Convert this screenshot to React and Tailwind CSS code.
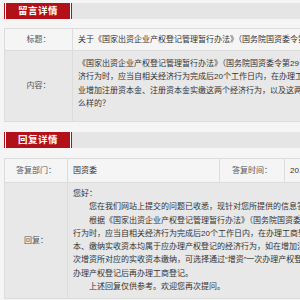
export default function App() {
  const font = { fontFamily: '"Liberation Sans", "Noto Sans CJK SC", sans-serif' };
  const Tab = ({ children }) => (
    <div className="h-[16px] flex bg-[#e5e5e5]">
      <div className="h-full w-[68px] border-x border-[#b3111a] bg-white px-[1px]">
        <div className="h-full bg-[#b3111a] flex items-center justify-center text-white text-[9.5px] font-bold leading-none tracking-[0.5px]">
          {children}
        </div>
      </div>
    </div>
  );
  return (
    <div className="w-[300px] h-[300px] overflow-hidden bg-[#f5f5f5]" style={font}>
      <div className="w-[460px] pl-[4px] pt-[3px] text-[8px] leading-[13.3px] text-[#333]">
        <Tab>留言详情</Tab>
        <div className="mt-[9px] border border-[#dcdcdc]">
          <div className="flex h-[21px] bg-[#f5f5f5]">
            <div className="w-[68px] shrink-0 border-r border-[#dcdcdc] flex items-center justify-center text-[#555]">标题：</div>
            <div className="flex-1 pl-[5px] flex items-center whitespace-nowrap overflow-hidden">
              关于《国家出资企业产权登记管理暂行办法》（国务院国资委令第29号）的咨询
            </div>
          </div>
          <div className="flex h-[71px] bg-[#e8e8e8] border-t border-[#dcdcdc]">
            <div className="w-[68px] shrink-0 border-r border-[#dcdcdc] flex items-center justify-center text-[#555]">内容：</div>
            <div className="flex-1 pl-[5px] pt-[6px] whitespace-nowrap overflow-hidden">
              <div>《国家出资企业产权登记管理暂行办法》（国务院国资委令第29号）规定</div>
              <div>济行为时，应当自相关经济行为完成后20个工作日内，在办理工商登记</div>
              <div>业增加注册资本金、注册资本金实缴这两个经济行为，以及这两个经济</div>
              <div>么样的？</div>
            </div>
          </div>
        </div>
        <div className="mt-[10px]">
          <Tab>回复详情</Tab>
        </div>
        <div className="mt-[10px] border border-[#dcdcdc]">
          <div className="flex h-[23px] bg-[#f5f5f5]">
            <div className="w-[63px] shrink-0 border-r border-[#dcdcdc] flex items-center justify-center text-[#555]">答复部门：</div>
            <div className="w-[152px] shrink-0 border-r border-[#dcdcdc] pl-[5px] flex items-center">国资委</div>
            <div className="w-[65px] shrink-0 border-r border-[#dcdcdc] flex items-center justify-center text-[#555]">答复时间：</div>
            <div className="flex-1 pl-[5px] flex items-center whitespace-nowrap">2019-08-05</div>
          </div>
          <div className="flex h-[116px] bg-[#e8e8e8] border-t border-[#dcdcdc]">
            <div className="w-[63px] shrink-0 border-r border-[#dcdcdc] flex items-center justify-center text-[#555]">回复：</div>
            <div className="flex-1 pl-[5px] pt-[4px] whitespace-nowrap overflow-hidden">
              <div>您好：</div>
              <div className="pl-[16px]">您在我们网站上提交的问题已收悉，现针对您所提供的信息答复如下：</div>
              <div className="pl-[16px]">根据《国家出资企业产权登记管理暂行办法》（国务院国资委令第29号）</div>
              <div>行为时，应当自相关经济行为完成后20个工作日内，在办理工商登记前</div>
              <div>本、缴纳实收资本均属于应办理产权登记的经济行为，如在增加注册资本</div>
              <div>次增资所对应的实收资本缴纳，可选择通过“增资”一次办理产权登记</div>
              <div>办理产权登记后再办理工商登记。</div>
              <div className="pl-[16px]">上述回复仅供参考。欢迎您再次提问。</div>
            </div>
          </div>
        </div>
      </div>
    </div>
  );
}
